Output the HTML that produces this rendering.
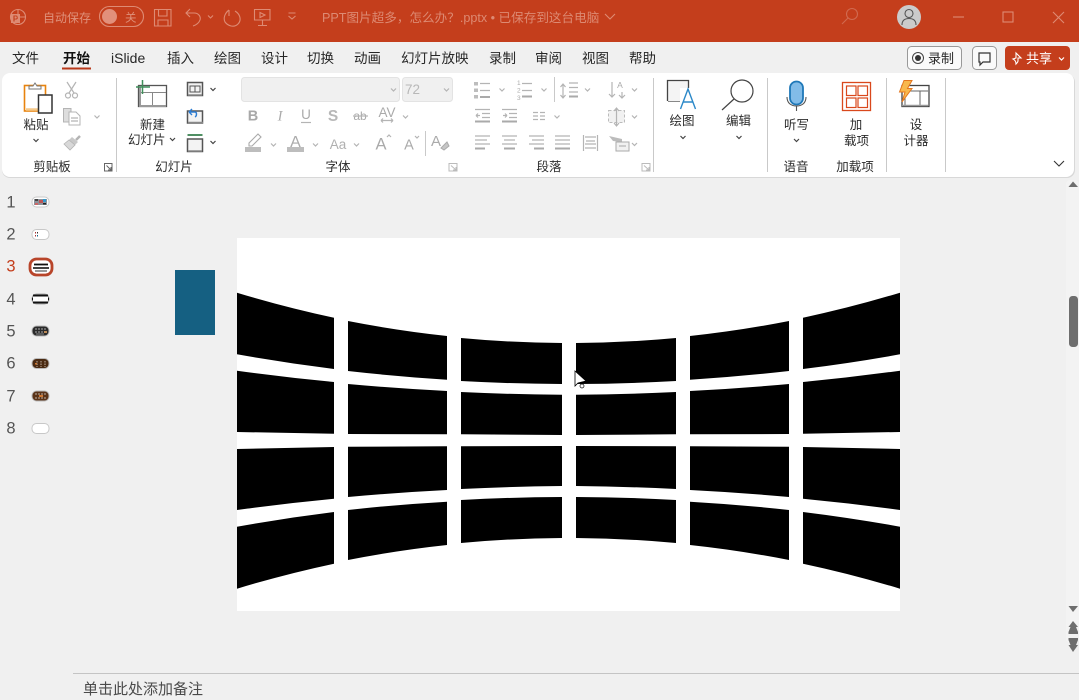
<!DOCTYPE html>
<html lang="zh"><head><meta charset="utf-8"><title>PPT</title>
<style>
html,body{margin:0;padding:0;width:1079px;height:700px;overflow:hidden;background:#f0f0f0}
svg{display:block;position:absolute;left:0;top:0}
text{font-family:"Liberation Sans","Noto Sans CJK SC",sans-serif;font-size:12.5px;fill:#2b2b2b}
.m{text-anchor:middle}
.tab{font-size:13.5px;fill:#262626}
.n{font-size:16.5px;fill:#555;text-anchor:middle;font-family:"Liberation Sans",sans-serif}
.t{fill:#df917b;font-size:12px}
.g{fill:none;stroke:#b4b4b4;stroke-width:1.2}
.d{fill:none;stroke:#555;stroke-width:1.2}
.k{fill:none;stroke:#444;stroke-width:1.2}
.ti{fill:none;stroke:#de8b74;stroke-width:1.1}
</style></head><body>
<svg width="1079" height="700" viewBox="0 0 1079 700" xmlns="http://www.w3.org/2000/svg">
<rect width="1079" height="700" fill="#f0f0f0"/>
<!-- title bar -->
<rect width="1079" height="42" fill="#c43e1c"/>
<circle cx="18" cy="17" r="7.5" class="ti"/><rect x="11" y="14" width="9" height="9" fill="#de8b74"/><text x="15.5" y="21.500" class="m" style="font-size:8px;font-weight:700;fill:#c43e1c">P</text><path d="M18 9.500V17H25.500" class="ti"/>
<text x="43" y="22" class="t">自动保存</text>
<rect x="99.500" y="6.500" width="44" height="20" rx="10" class="ti"/><circle cx="109.500" cy="16.500" r="7.500" fill="#e2907b"/>
<text x="125" y="21.500" class="t" style="font-size:11.5px">关</text>
<path d="M154.500 9.500H171V26H154.500ZM158.500 10V16H167V10M158 26V20H168V26" class="ti"/>
<path d="M186 13H194C199 13 201 17 200 20C199 23 196 25 193 26M190 9L186 13L190 17" class="ti"/>
<path d="M208 15.500l2.500 2.500 2.500-2.500" class="ti"/>
<path d="M235 11C240 14 242 20 238 24C234 28 228 26 225 22C223 18 225 13 229 10M229 10V16" class="ti"/>
<path d="M254.500 9.500H270V20H254.500ZM262.500 20V25.500M258 25.500H267M260 12.500V17.500L265 15Z" class="ti"/>
<path d="M288.500 13h7M288.500 16l3.500 3 3.500-3" class="ti"/>
<text x="322" y="22" class="t" style="fill:#dd8a73;font-size:12.6px">PPT图片超多，怎么办？.pptx • 已保存到这台电脑</text>
<path d="M605 14l5 5 5-5" class="ti"/>
<circle cx="852" cy="14" r="5.500" class="ti" style="stroke:#d16a50"/><path d="M848 18l-6 6" class="ti" style="stroke:#d16a50"/>
<circle cx="909" cy="17" r="12" fill="#cbcbcb"/><circle cx="909" cy="13.500" r="4" fill="none" stroke="#555" stroke-width="1.100"/><path d="M902 25C902 20 905 18.500 909 18.500S916 20 916 25" fill="none" stroke="#555" stroke-width="1.100"/>
<path d="M953 17h11" class="ti"/><rect x="1003" y="12" width="10" height="10" class="ti"/><path d="M1053 12l11 11M1064 12l-11 11" class="ti"/>
<!-- tabs -->
<text x="12" y="63" class="tab">文件</text>
<text x="63" y="63" class="tab" style="font-weight:700;fill:#111">开始</text>
<rect x="62" y="67.500" width="29" height="2" fill="#b8381a"/>
<text x="111" y="63" class="tab" style="font-size:14px">iSlide</text>
<text x="167" y="63" class="tab">插入</text><text x="214" y="63" class="tab">绘图</text><text x="261" y="63" class="tab">设计</text><text x="307" y="63" class="tab">切换</text><text x="354" y="63" class="tab">动画</text><text x="401" y="63" class="tab">幻灯片放映</text><text x="489" y="63" class="tab">录制</text><text x="535" y="63" class="tab">审阅</text><text x="582" y="63" class="tab">视图</text><text x="629" y="63" class="tab">帮助</text>
<rect x="907.500" y="46.500" width="54" height="23" rx="4" fill="#fafafa" stroke="#999"/>
<circle cx="918" cy="58" r="5.500" fill="none" stroke="#444"/><circle cx="918" cy="58" r="3" fill="#333"/>
<text x="928" y="63" class="tab" style="font-size:13px">录制</text>
<rect x="972.500" y="46.500" width="24" height="23" rx="4" fill="#fafafa" stroke="#999"/><path d="M979 53H990V62H983L980 65V62H979Z" fill="none" stroke="#333" stroke-width="1.200"/>
<rect x="1005" y="46" width="65" height="24" rx="4" fill="#c43e1c"/>
<path d="M1016 53L1021 58H1018V61C1018 62 1017 63 1016 64C1016 62 1015 60 1013 59L1016 58Z" fill="none" stroke="#fff" stroke-width="1.100"/>
<text x="1026" y="63" style="font-size:13px;fill:#fff">共享</text><path d="M1059 57.500l2.500 2.500 2.500-2.500" fill="none" stroke="#fff" stroke-width="1.200"/>
<!-- ribbon -->
<rect x="2" y="74" width="1073" height="104" rx="8" fill="#d8d8d8"/>
<rect x="2" y="73" width="1072" height="104" rx="8" fill="#fff"/>
<g fill="#c9c9c9"><rect x="116" y="78" width="1" height="94"/><rect x="653" y="78" width="1" height="94"/><rect x="767" y="78" width="1" height="94"/><rect x="886" y="78" width="1" height="94"/><rect x="945" y="78" width="1" height="94"/><rect x="425" y="131" width="1" height="25"/><rect x="554" y="77" width="1" height="25"/></g>
<!-- clipboard group -->
<rect x="24.500" y="85.500" width="21" height="25.500" fill="#fff" stroke="#e8830e" stroke-width="1.600"/><path d="M26 109.500H45" stroke="#f5c98a" stroke-width="2.500"/>
<path d="M29 89V86H33L35 83L37 86H41V89Z" fill="#fff" stroke="#777"/>
<rect x="38.500" y="95" width="13.500" height="18" fill="#fff" stroke="#333" stroke-width="1.500"/>
<text x="36" y="129" class="m">粘贴</text><path d="M33.500 139l2.500 2.500 2.500-2.500" class="k"/>
<path d="M67 82L74 93M76 82L69 93" class="g"/><circle cx="68" cy="95.500" r="2.500" class="g"/><circle cx="75" cy="95.500" r="2.500" class="g"/>
<path d="M63.500 108.500H71V122H63.500Z" fill="#ddd" stroke="#b4b4b4"/><path d="M69 112H76L80 116V125H69Z" fill="#fff" stroke="#b4b4b4"/><path d="M71 118H78M71 121H78" class="g"/>
<path d="M94.500 115.500l2.500 2.500 2.500-2.500" class="g"/>
<path d="M80 136L76 140" stroke="#b4b4b4" stroke-width="2.500"/><path d="M72 137L78 142L75 145L69 140Z" fill="#c8c8c8"/><path d="M69 140L75 145L70 150L64 144Z" fill="#d8d8d8" stroke="#b4b4b4" stroke-width=".8"/>
<text x="52" y="171" class="m">剪贴板</text>
<path d="M104.500 163.500H112V171H104.500ZM106.500 165.500L111 170M111 167V170H108" fill="none" stroke="#666"/>
<!-- slides group -->
<rect x="138.500" y="85.500" width="28" height="21" fill="#fff" stroke="#555" stroke-width="1.300"/><path d="M139 92.500H166M152.500 92.500V106" stroke="#888" fill="none"/><path d="M140 87V106H166" fill="none" stroke="#999" stroke-width="2"/>
<path d="M142.500 80V94M136 87H150" stroke="#3f8f5b" stroke-width="1.500"/>
<text x="152.500" y="129" class="m">新建</text><text x="128" y="144">幻灯片</text><path d="M170 138l2.500 2.500 2.500-2.500" class="k"/>
<rect x="187.500" y="82.500" width="15" height="13" fill="#f3f3f3" stroke="#555" stroke-width="1.500"/><path d="M190 86H200V92H190ZM195 86V92" fill="none" stroke="#555"/><path d="M188 95H202" stroke="#888" stroke-width="1.500"/>
<path d="M210.500 88l2.500 2.500 2.500-2.500" class="k"/>
<rect x="187.500" y="111" width="15" height="12" fill="#f3f3f3" stroke="#555" stroke-width="1.500"/><path d="M188 122.500H203" stroke="#888" stroke-width="1.500"/>
<path d="M189 112L192 109M189 112L192 115M189 112H195C197 112 197 116 195 117" fill="none" stroke="#2b7cd3" stroke-width="1.400"/>
<rect x="187.500" y="134" width="15" height="2" fill="#4f8f63"/><rect x="187.500" y="139" width="15" height="12.500" fill="#f3f3f3" stroke="#555" stroke-width="1.500"/><path d="M188 151H202" stroke="#888" stroke-width="1.500"/>
<path d="M210.500 141l2.500 2.500 2.500-2.500" class="k"/>
<text x="174" y="171" class="m">幻灯片</text>
<!-- font group -->
<rect x="241.500" y="77.500" width="158" height="24" rx="3" fill="#f0f0f0" stroke="#e3e3e3"/><path d="M391 88.500l2.500 2.500 2.500-2.500" class="g"/>
<rect x="402.500" y="77.500" width="50" height="24" rx="3" fill="#f0f0f0" stroke="#e3e3e3"/><text x="405" y="94" style="font-size:13.500px;fill:#b8b8b8">72</text><path d="M444 88.500l2.500 2.500 2.500-2.500" class="g"/>
<text x="253" y="120.500" class="m" style="font-size:14.500px;font-weight:700;fill:#a8a8a8">B</text>
<text x="280" y="120.500" class="m" style="font-size:14.500px;font-style:italic;fill:#aaa;font-family:'Liberation Serif',serif">I</text>
<text x="306" y="119" class="m" style="font-size:13.500px;fill:#aaa">U</text><path d="M301 122.500H311" class="g"/>
<text x="333" y="121" class="m" style="font-size:15.500px;font-weight:700;fill:#b8b8b8">S</text>
<text x="360" y="120" class="m" style="font-size:12px;fill:#aaa">ab</text><path d="M353 116H368" class="g"/>
<text x="387" y="117" class="m" style="font-size:13.500px;fill:#aaa">AV</text><path d="M381 120.500H393M381 120.500l2 2M393 120.500l-2 2M381 120.500l2-2M393 120.500l-2-2" class="g" stroke-width="1"/>
<path d="M403 115.500l2.500 2.500 2.500-2.500" class="g"/>
<path d="M249 143L258 134L261 137L252 146H249Z" fill="#fff" stroke="#aaa" stroke-width="1.100"/><rect x="245" y="147" width="16" height="5" fill="#bdbdbd"/><path d="M271 143.500l2.500 2.500 2.500-2.500" class="g"/>
<text x="295.500" y="147" class="m" style="font-size:16px;fill:#aaa">A</text><rect x="287" y="147" width="17" height="5" fill="#bdbdbd"/><path d="M313 143.500l2.500 2.500 2.500-2.500" class="g"/>
<text x="338" y="149" class="m" style="font-size:13.500px;fill:#b0b0b0">Aa</text><path d="M354 143.500l2.500 2.500 2.500-2.500" class="g"/>
<text x="381" y="149.500" class="m" style="font-size:16.500px;fill:#aaa">A</text><path d="M387 137l2 -2 2 2" class="g"/>
<text x="409" y="149.500" class="m" style="font-size:14.500px;fill:#aaa">A</text><path d="M415 136l2 2 2-2" class="g"/>
<text x="436" y="146" class="m" style="font-size:15px;fill:#aaa">A</text><path d="M441 148L447 142L449 146L444 150Z" fill="#c6c6c6" stroke="#aaa"/>
<text x="338" y="171" class="m">字体</text>
<path d="M449 163.500H457V171H449ZM451 165.500L456 170M456 167V170H453" fill="none" stroke="#bbb"/>
<!-- paragraph group -->
<g fill="#bdbdbd"><rect x="474" y="82" width="4" height="3.500"/><rect x="474" y="88.500" width="4" height="3.500"/><rect x="474" y="95" width="4" height="3.500"/></g>
<path d="M480 83.500H490M480 90.500H490" class="g"/><path d="M480 97H490" stroke="#aaa" stroke-width="2"/><path d="M499.500 88.500l2.500 2.500 2.500-2.500" class="g"/>
<text x="517" y="85" style="font-size:6.500px;fill:#aaa">1</text><text x="517" y="92.500" style="font-size:6.500px;fill:#aaa">2</text><text x="517" y="100" style="font-size:6.500px;fill:#aaa">3</text>
<path d="M522 83.500H532M522 90.500H532" class="g"/><path d="M522 96.500H532" stroke="#aaa" stroke-width="2"/><path d="M541.500 88.500l2.500 2.500 2.500-2.500" class="g"/>
<path d="M563 84V98M560.500 87l2.500-3 2.500 3M560.500 95l2.500 3 2.500-3" class="g"/><path d="M569 83H578M569 87.500H578M569 92H578" class="g"/><path d="M569 96.500H578" stroke="#aaa" stroke-width="2"/><path d="M585 88.500l2.500 2.500 2.500-2.500" class="g"/>
<path d="M612 82V97M609 94l3 3 3-3M622 92V98M619 95l3 3 3-3" class="g"/><text x="620" y="88" style="font-size:8.500px;fill:#aaa" class="m">A</text><path d="M632 88.500l2.500 2.500 2.500-2.500" class="g"/>
<path d="M475 109.500H490M482 113.500H490M482 117.500H490M476 115.500h4M476 115.500l2-2M476 115.500l2 2" class="g"/><path d="M475 121.500H490" stroke="#aaa" stroke-width="2"/>
<path d="M502 109.500H517M509 113.500H517M509 117.500H517M503 115.500h4M507 115.500l-2-2M507 115.500l-2 2" class="g"/><path d="M502 121.500H517" stroke="#aaa" stroke-width="2"/>
<path d="M533 112.500H538M533 116H538M533 119.500H538M540 112.500H545M540 116H545M540 119.500H545" class="g"/>
<path d="M554.500 115.500l2.500 2.500 2.500-2.500" class="g"/>
<rect x="608.500" y="110.500" width="16" height="12" fill="#f1f1f1" stroke="#bbb" stroke-dasharray="3 2"/><path d="M616.500 108V126M614 111l2.500-3 2.500 3M614 123l2.500 3 2.500-3" class="g"/><path d="M632 115.500l2.500 2.500 2.500-2.500" class="g"/>
<path d="M475 136H490M475 140H487M475 144H490" class="g"/><path d="M475 148.500H485" stroke="#aaa" stroke-width="2"/>
<path d="M502 136H517M504 140H515M502 144H517" class="g"/><path d="M504 148.500H515" stroke="#aaa" stroke-width="2"/>
<path d="M529 136H544M532 140H544M529 144H544" class="g"/><path d="M534 148.500H544" stroke="#aaa" stroke-width="2"/>
<path d="M555 136H570M555 140H570M555 144H570" class="g"/><path d="M555 148.500H570" stroke="#aaa" stroke-width="2"/>
<path d="M583.500 135V151M597.500 135V151M585 137H596M585 144H596M585 148H596M586 141H595" class="g"/>
<path d="M609 136L622 139V142L613 141Z" fill="#bcbcbc"/><rect x="616" y="142" width="13" height="9" fill="#f1f1f1" stroke="#aaa"/><path d="M619 146H626" class="g"/><path d="M632 143l2.500 2.500 2.500-2.500" class="g"/>
<text x="549" y="171" class="m">段落</text>
<path d="M642 163.500H650V171H642ZM644 165.500L649 170M649 167V170H646" fill="none" stroke="#bbb"/>
<!-- drawing -->
<path d="M667.500 101.500H680V88H688.500V80.500H667.500Z" fill="#f4f4f4"/><path d="M667.500 101V80.500H688.500V88" fill="none" stroke="#444" stroke-width="1.300"/><path d="M668 101.500H680" stroke="#888"/>
<path d="M680.500 109L688 89L695.500 109M683 102H693" fill="none" stroke="#2b88c8" stroke-width="1.400"/>
<text x="682" y="125" class="m">绘图</text><path d="M680.500 136l2.500 2.500 2.500-2.500" class="k"/>
<circle cx="742" cy="91" r="11" fill="#fff" stroke="#444" stroke-width="1.200"/><path d="M734 99L722 110" stroke="#444" stroke-width="1.200"/>
<text x="738.500" y="125" class="m">编辑</text><path d="M736.500 136l2.500 2.500 2.500-2.500" class="k"/>
<rect x="790" y="81.500" width="13" height="23" rx="6.500" fill="#82bce8" stroke="#1f78b8" stroke-width="1.800"/>
<path d="M787 97C787 103 791 106 796.500 106S806 103 806 97M796.500 106V111" fill="none" stroke="#555" stroke-width="1.100"/>
<text x="796.500" y="129" class="m">听写</text><path d="M794 139l2.500 2.500 2.500-2.500" class="k"/>
<text x="796" y="171" class="m">语音</text>
<rect x="842.500" y="82.500" width="28" height="28" fill="#fff" stroke="#d9481c" stroke-width="1.300"/>
<g fill="none" stroke="#d9481c" stroke-width="1.200"><rect x="846.500" y="86" width="9.500" height="9.500"/><rect x="858" y="86" width="9.500" height="9.500"/><rect x="846.500" y="98" width="9.500" height="9.500"/><rect x="858" y="98" width="9.500" height="9.500"/></g>
<text x="856" y="129" class="m">加</text><text x="856.500" y="145" class="m">载项</text>
<text x="855" y="171" class="m">加载项</text>
<rect x="902" y="85.500" width="27" height="21" fill="#fff" stroke="#444" stroke-width="1.300"/><path d="M903 91H928M920 91V105M905 92V105" fill="none" stroke="#666"/><path d="M902 105.500H928" stroke="#999" stroke-width="1.500"/>
<path d="M904 80.500H912L907.500 88.500H912L902 102L905 92H899.500Z" fill="#f8b84d" stroke="#e4761c"/>
<text x="916" y="129" class="m">设</text><text x="916" y="145" class="m">计器</text>
<path d="M1054 161l5 5 5-5" fill="none" stroke="#333" stroke-width="1.100"/>
<!-- sidebar -->
<text x="11" y="207.500" class="n">1</text><text x="11" y="239.500" class="n">2</text><text x="11" y="271.500" class="n" style="fill:#c43e1c">3</text><text x="11" y="304.500" class="n">4</text><text x="11" y="336.500" class="n">5</text><text x="11" y="368.500" class="n">6</text><text x="11" y="401.500" class="n">7</text><text x="11" y="433.500" class="n">8</text>
<rect x="32" y="197" width="17" height="10" rx="4.500" fill="#fff" stroke="#c8c8c8"/><rect x="34" y="199" width="13" height="6" fill="#8d929a"/><rect x="35" y="199" width="3" height="2" fill="#444"/><rect x="39" y="200" width="4" height="3" fill="#b55"/><rect x="43" y="199" width="3" height="3" fill="#39c"/><rect x="35" y="203" width="3" height="2" fill="#c66"/><rect x="43" y="203" width="3" height="1.500" fill="#222"/>
<rect x="32" y="229.500" width="17" height="10" rx="4.500" fill="#fff" stroke="#c8c8c8"/><rect x="35" y="232" width="1" height="1.500" fill="#a33"/><rect x="37" y="232" width="1" height="1.500" fill="#333"/><rect x="35" y="235" width="1" height="1.500" fill="#a33"/><rect x="37" y="235" width="1" height="1.500" fill="#168"/>
<rect x="30" y="259" width="22" height="16" rx="6.500" fill="#fff" stroke="#b8452a" stroke-width="2.800"/><path d="M34 264.500H48" stroke="#111" stroke-width="1.800"/><path d="M33 268H49" stroke="#111" stroke-width="1.600"/><path d="M35 271H47" stroke="#333"/>
<rect x="32" y="294" width="17" height="10" rx="4.500" fill="#fff" stroke="#aaa"/><path d="M33 295.500H48M33 302.500H48" stroke="#111" stroke-width="2"/><path d="M32 299H33M48 299H49" stroke="#111" stroke-width="3"/>
<rect x="32" y="326" width="17" height="10" rx="4.500" fill="#2a2a2a" stroke="#bbb"/><path d="M35 329H46M35 332H46" stroke="#aaa" stroke-dasharray="2 1"/><rect x="44" y="331" width="3" height="2" fill="#b85"/><rect x="36" y="333.500" width="8" height="1" fill="#888"/>
<rect x="32" y="358.500" width="17" height="10" rx="4.500" fill="#4a2a12" stroke="#bbb"/><path d="M37 361V367M41 361V367M45 361V367" stroke="#a98" stroke-width="1.200" stroke-dasharray="1.500 1"/><rect x="35" y="363" width="2" height="1.500" fill="#c73"/>
<rect x="32" y="391" width="17" height="10" rx="4.500" fill="#5a3318" stroke="#bbb"/><path d="M35 394H46M35 398H46" stroke="#a98" stroke-width="1.200" stroke-dasharray="2 1"/><rect x="39" y="395" width="4" height="2" fill="#c73"/>
<rect x="32" y="423.500" width="17" height="10" rx="4.500" fill="#fff" stroke="#c8c8c8"/>
<rect x="175" y="270" width="40" height="65" fill="#156082"/>
<!-- slide -->
<rect x="237" y="238" width="663" height="373" fill="#fff"/>
<g fill="#000">
<path d="M237 292.700Q285.500 307.400 334 317.700V369Q285.500 363 237 354.300Z"/>
<path d="M237 370.700Q285.500 377.400 334 382V433.700L237 432Z"/>
<path d="M237 449L334 447V498.700Q285.500 503.300 237 510Z"/>
<path d="M237 526.700Q285.500 518 334 512V563.700Q285.500 574 237 588.700Z"/>
<path d="M348 321Q397.500 330.700 447 336V379.700Q397.500 376.600 348 371Z"/>
<path d="M348 384Q397.500 388.500 447 391V434.300L348 434Z"/>
<path d="M348 446.700L447 446.300V490Q397.500 492.500 348 497Z"/>
<path d="M348 510Q397.500 504.500 447 501.700V545Q397.500 550.300 348 560Z"/>
<path d="M461 338Q511 342.700 562 343V384Q511 383.800 461 381Z"/>
<path d="M461 392Q511 394.400 562 394.700V435L461 434.300Z"/>
<path d="M461 446.300L562 446V486Q511 486.500 461 489Z"/>
<path d="M461 500Q511 497.200 562 497V538Q511 538.300 461 543Z"/>
</g>
<g fill="#000" transform="translate(1137,0) scale(-1,1)">
<path d="M237 292.700Q285.500 307.400 334 317.700V369Q285.500 363 237 354.300Z"/>
<path d="M237 370.700Q285.500 377.400 334 382V433.700L237 432Z"/>
<path d="M237 449L334 447V498.700Q285.500 503.300 237 510Z"/>
<path d="M237 526.700Q285.500 518 334 512V563.700Q285.500 574 237 588.700Z"/>
<path d="M348 321Q397.500 330.700 447 336V379.700Q397.500 376.600 348 371Z"/>
<path d="M348 384Q397.500 388.500 447 391V434.300L348 434Z"/>
<path d="M348 446.700L447 446.300V490Q397.500 492.500 348 497Z"/>
<path d="M348 510Q397.500 504.500 447 501.700V545Q397.500 550.300 348 560Z"/>
<path d="M461 338Q511 342.700 561 343V384Q511 383.800 461 381Z"/>
<path d="M461 392Q511 394.400 561 394.700V435L461 434.300Z"/>
<path d="M461 446.300L561 446V486Q511 486.500 461 489Z"/>
<path d="M461 500Q511 497.200 561 497V538Q511 538.300 461 543Z"/>
</g>
<path d="M575 371V386L578 383L586 381Z" fill="#fff" stroke="#000" stroke-width=".8"/><circle cx="582" cy="386" r="2" fill="#fff" stroke="#000" stroke-width=".7"/>
<!-- scrollbar -->
<rect x="1066" y="180" width="13" height="463" rx="4" fill="#f3f3f3"/>
<path d="M1073 181.500L1078 187H1068.500Z" fill="#6e6e6e"/>
<rect x="1069" y="296" width="9" height="51" rx="3.500" fill="#6e6e6e"/>
<path d="M1068.500 606H1078L1073 612Z" fill="#6e6e6e"/>
<path d="M1073 621L1078 627H1076L1078 632V634H1068.500V632L1070.500 627H1068.500Z" fill="#6e6e6e"/>
<path d="M1068.500 638H1078V640L1076 645H1078L1073 652L1068.500 645H1070.500L1068.500 640Z" fill="#6e6e6e"/>
<!-- notes -->
<rect x="73" y="673" width="1006" height="1" fill="#c4c4c4"/>
<text x="83" y="694" style="font-size:15px;fill:#4a4a4a">单击此处添加备注</text>
</svg>
</body></html>
